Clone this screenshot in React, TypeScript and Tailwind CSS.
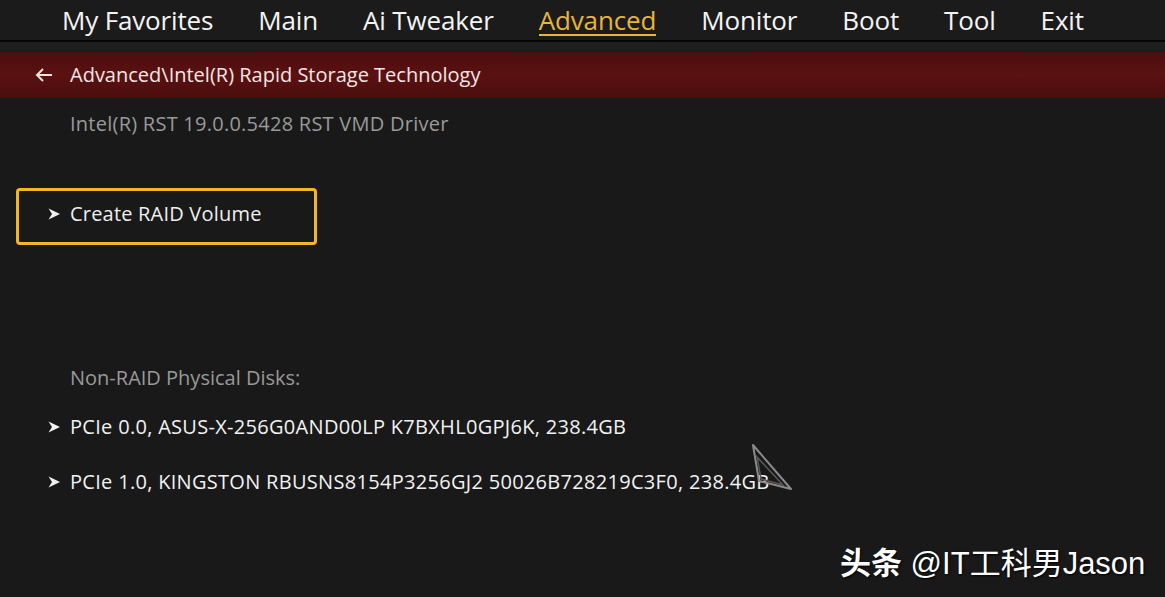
import { ChevronRight } from 'lucide-react';

const tabs = ['My Favorites', 'Main', 'Ai Tweaker', 'Advanced', 'Monitor', 'Boot', 'Tool', 'Exit'];

const disks = [
  'PCIe 0.0, ASUS-X-256G0AND00LP K7BXHL0GPJ6K, 238.4GB',
  'PCIe 1.0, KINGSTON RBUSNS8154P3256GJ2 50026B728219C3F0, 238.4GB',
];

function Arrow() {
  return (
    <svg width="14" height="14" viewBox="0 0 14 14" className="shrink-0">
      <path d="M1.5 1.5 L13 7 L1.5 12.5 L5 7 Z" fill="#f2f2f2" />
    </svg>
  );
}

// mouse pointer outline drawn over the list
function Pointer() {
  return (
    <svg width="44" height="50" viewBox="0 0 44 50" className="absolute left-[750px] top-[443px]">
      <path d="M3 2 L41 46 L9 38 Z" fill="none" stroke="#8a8a8a" strokeWidth="2" strokeLinejoin="round" />
      <path d="M7 14 L33 42 L11 36 Z" fill="none" stroke="#5a5a5a" strokeWidth="1.5" />
    </svg>
  );
}

export default function App() {
  return (
    <div
      className="relative w-[1165px] h-[597px] overflow-hidden bg-[#191919] text-[#f2f2f2]"
      style={{ fontFamily: '"Open Sans", "Noto Sans", sans-serif' }}
    >
      {/* --- Top tabs --- */}
      <nav className="h-[42px] flex items-start pl-[62px] gap-[45px] bg-[#1b1b1b] border-b-2 border-[#050505]">
        {tabs.map((t) => (
          <div
            key={t}
            className={`text-[26px] leading-[40px] tracking-[-0.15px] ${
              t === 'Advanced' ? 'text-[#e8b53a] relative' : 'text-[#f4f4f4]'
            }`}
          >
            {t}
            {t === 'Advanced' && <div className="absolute left-0 right-0 top-[34px] h-[2px] bg-[#e8b53a]" />}
          </div>
        ))}
      </nav>

      <div className="h-[10px] bg-gradient-to-b from-[#202020] to-[#1c1c1c]" />

      {/* --- Breadcrumb band --- */}
      <div className="h-[46px] flex items-center pl-[34px] gap-[16px] bg-gradient-to-b from-[#4c0d0d] via-[#5a1111] to-[#4c0d0d]">
        <svg width="20" height="16" viewBox="0 0 20 16" className="shrink-0">
          <path d="M18 8 H3 M9 2 L3 8 L9 14" fill="none" stroke="#f0e0e0" strokeWidth="2" />
        </svg>
        <span className="text-[20px] text-[#f3e6e6]">Advanced\Intel(R) Rapid Storage Technology</span>
      </div>

      {/* --- Content --- */}
      <div className="pl-[70px] pt-[13px] text-[20px]">
        <div className="text-[#9a9a9a] leading-[26px] tracking-[0.25px]">Intel(R) RST 19.0.0.5428 RST VMD Driver</div>
      </div>

      <div className="ml-[16px] mt-[51px] w-[301px] h-[57px] rounded-[4px] border-[3px] border-[#f1b724] flex items-center pl-[28px] pb-[6px] gap-[9px]">
        <Arrow />
        <span className="text-[20px] tracking-[0.2px] text-[#efefef]">Create RAID Volume</span>
      </div>

      <div className="pl-[70px] mt-[120px] text-[20px] text-[#9a9a9a] leading-[26px]">
        Non-RAID Physical Disks:
      </div>

      <div className="pl-[47px] mt-[23px] flex flex-col gap-[29px]">
        {disks.map((d) => (
          <div key={d} className="flex items-center gap-[9px] h-[26px]">
            <Arrow />
            <span className="text-[20px] tracking-[0.3px] text-[#f2f2f2]">{d}</span>
          </div>
        ))}
      </div>

      <Pointer />

      {/* watermark */}
      <div
        className="absolute left-[840px] top-[544px] text-[31px] text-white leading-[40px] [text-shadow:1px_1px_2px_#000]"
        style={{ fontFamily: 'Arial, "Liberation Sans", "Noto Sans CJK SC", sans-serif' }}
      >
        <span className="font-bold">头条</span> @IT工科男Jason
      </div>
    </div>
  );
}
